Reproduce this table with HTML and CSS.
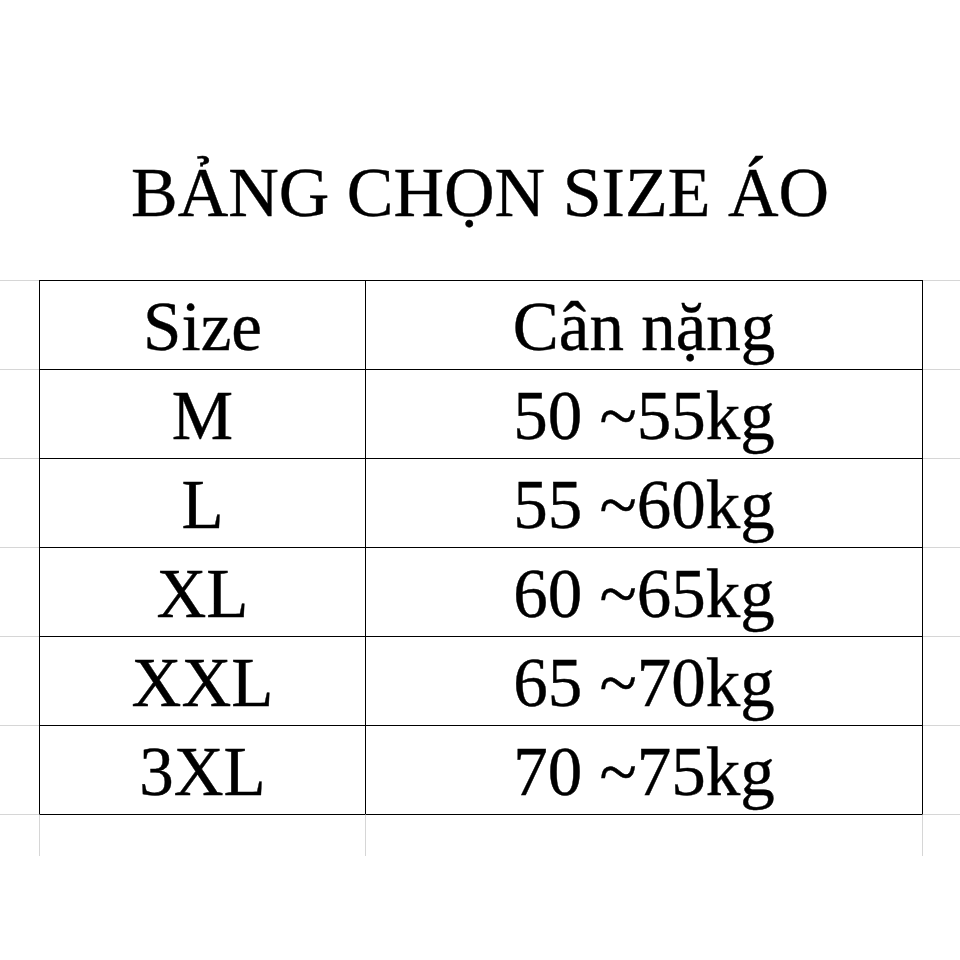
FILE: index.html
```html
<!DOCTYPE html>
<html lang="vi">
<head>
<meta charset="utf-8">
<title>Bảng chọn size áo</title>
<link rel="stylesheet" href="styles.css">
</head>
<body>
<div class="page">
  <header class="title">BẢNG CHỌN SIZE ÁO</header>
  <div class="sheet">
    <div class="row">
      <div class="gutter"></div>
      <div class="cell size">Size</div>
      <div class="cell weight">Cân nặng</div>
      <div class="gutter"></div>
    </div>
    <div class="row">
      <div class="gutter"></div>
      <div class="cell size">M</div>
      <div class="cell weight">50 ~55kg</div>
      <div class="gutter"></div>
    </div>
    <div class="row">
      <div class="gutter"></div>
      <div class="cell size">L</div>
      <div class="cell weight">55 ~60kg</div>
      <div class="gutter"></div>
    </div>
    <div class="row">
      <div class="gutter"></div>
      <div class="cell size">XL</div>
      <div class="cell weight">60 ~65kg</div>
      <div class="gutter"></div>
    </div>
    <div class="row">
      <div class="gutter"></div>
      <div class="cell size">XXL</div>
      <div class="cell weight">65 ~70kg</div>
      <div class="gutter"></div>
    </div>
    <div class="row last">
      <div class="gutter"></div>
      <div class="cell size">3XL</div>
      <div class="cell weight">70 ~75kg</div>
      <div class="gutter"></div>
    </div>
    <div class="row tail">
      <div class="gutter"></div>
      <div class="cell size"></div>
      <div class="cell weight"></div>
      <div class="gutter"></div>
    </div>
  </div>
</div>
</body>
</html>
```

FILE: styles.css
```css
html, body {
  margin: 0;
  padding: 0;
  background: #ffffff;
}

.page {
  width: 960px;
  height: 960px;
  font-family: "Liberation Serif", "Times New Roman", serif;
  color: #000000;
  -webkit-text-stroke: 0.4px #000000;
}

.title {
  box-sizing: border-box;
  height: 280px;
  padding-top: 158px;
  font-size: 70px;
  line-height: 70px;
  text-align: center;
}

.row {
  display: grid;
  grid-template-columns: 39px 326px 558px 37px;
  height: 89px;
}

.gutter {
  border-top: 1px solid #d6d6d6;
}

.cell {
  box-sizing: border-box;
  border-top: 1px solid #000000;
  border-left: 1px solid #000000;
  font-size: 69px;
  line-height: 69px;
  padding-top: 12px;
  text-align: center;
}

.weight {
  border-right: 1px solid #000000;
}

.row.last {
  height: 89px;
}

.row.tail {
  height: 42px;
}

.row.tail .cell {
  border-top: 1px solid #000000;
  border-left-color: #d6d6d6;
}

.row.tail .weight {
  border-right-color: #d6d6d6;
}
```
